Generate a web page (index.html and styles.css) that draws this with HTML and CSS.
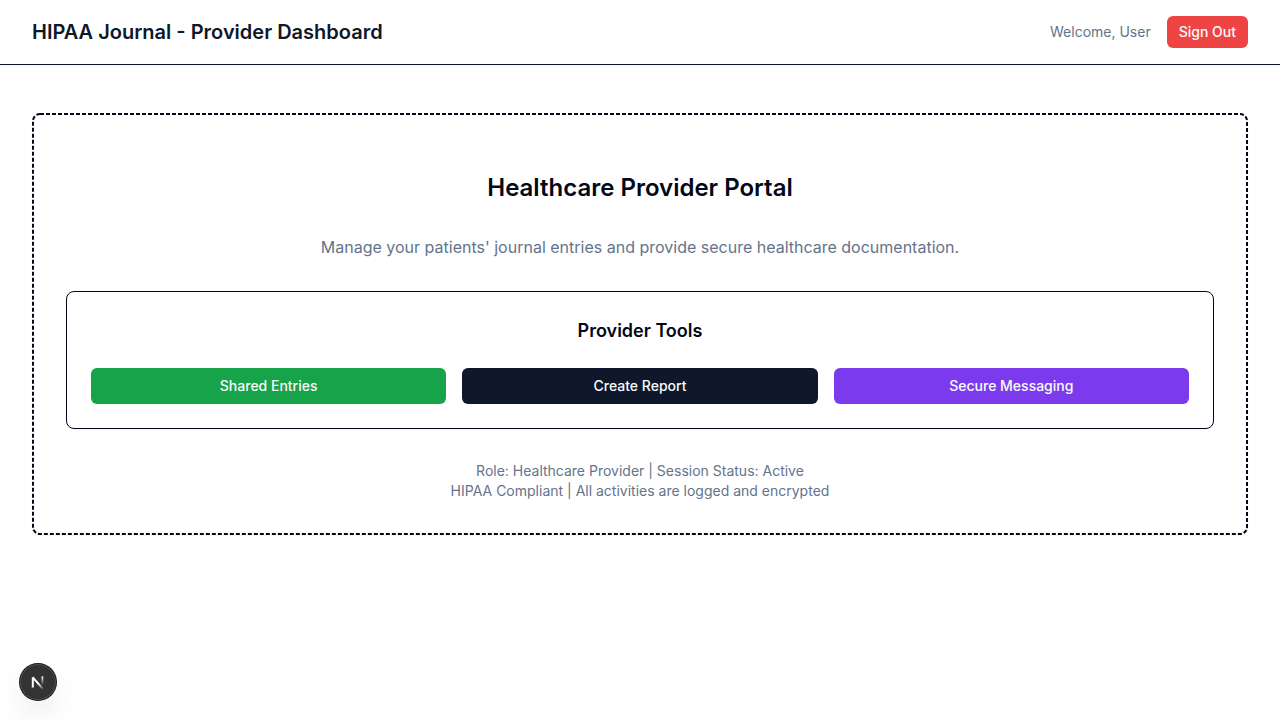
FILE: index.html
```html
<!DOCTYPE html>
<html lang="en">
<head>
  <meta charset="utf-8">
  <meta name="viewport" content="width=device-width, initial-scale=1">
  <title>HIPAA Journal - Provider Dashboard</title>
  <link rel="stylesheet" href="styles.css">
</head>
<body>
  <header class="topbar">
    <h1 class="topbar-title">HIPAA Journal - Provider Dashboard</h1>
    <div class="topbar-actions">
      <span class="welcome">Welcome, User</span>
      <button class="btn btn-small btn-red" type="button">Sign Out</button>
    </div>
  </header>
  <main class="main">
    <section class="portal">
      <svg class="portal-outline" aria-hidden="true">
        <rect class="portal-outline-rect" x="1" y="1" rx="7"/>
      </svg>
      <h2 class="portal-title">Healthcare Provider Portal</h2>
      <p class="portal-text">Manage your patients' journal entries and provide secure healthcare documentation.</p>
      <section class="tools">
        <h3 class="tools-title">Provider Tools</h3>
        <div class="tools-grid">
          <button class="btn btn-green" type="button">Shared Entries</button>
          <button class="btn btn-navy" type="button">Create Report</button>
          <button class="btn btn-violet" type="button">Secure Messaging</button>
        </div>
      </section>
      <div class="status">
        <p>Role: Healthcare Provider | Session Status: Active</p>
        <p>HIPAA Compliant | All activities are logged and encrypted</p>
      </div>
    </section>
  </main>
  <button class="dev-badge" type="button" aria-label="Open developer tools">
    <svg width="36" height="36" viewBox="0 0 36 36" fill="none" aria-hidden="true">
      <defs>
        <linearGradient id="fade-diagonal" x1="19" y1="19" x2="24" y2="25" gradientUnits="userSpaceOnUse">
          <stop stop-color="#fff"/>
          <stop offset="1" stop-color="#fff" stop-opacity="0"/>
        </linearGradient>
        <linearGradient id="fade-stem" x1="22" y1="12.5" x2="22" y2="21" gradientUnits="userSpaceOnUse">
          <stop stop-color="#fff"/>
          <stop offset="1" stop-color="#fff" stop-opacity="0"/>
        </linearGradient>
      </defs>
      <path d="M12.8 23.6V13.4L23 25" stroke="url(#fade-diagonal)" stroke-width="2" stroke-linejoin="bevel"/>
      <path d="M22.4 12.4V22" stroke="url(#fade-stem)" stroke-width="1.8"/>
    </svg>
  </button>
</body>
</html>
```
FILE: styles.css
```css
* {
  box-sizing: border-box;
  margin: 0;
}

body {
  min-height: 100vh;
  background: #fff;
  color: #020817;
  font-family: Inter, "Liberation Sans", sans-serif;
  font-size: 14px;
  line-height: 20px;
}

.topbar {
  display: flex;
  align-items: center;
  justify-content: space-between;
  padding: 16px 32px;
  border-bottom: 1px solid #0f172a;
  box-shadow: 0 1px 2px rgba(0, 0, 0, 0.05);
}

.topbar-title {
  color: #0f172a;
  font-size: 20px;
  line-height: 28px;
  font-weight: 600;
}

.topbar-actions {
  display: flex;
  align-items: center;
  gap: 16px;
}

.welcome,
.portal-text,
.status {
  color: #64748b;
}

.btn {
  height: 36px;
  padding: 0 16px;
  border: 0;
  border-radius: 6px;
  color: #f8fafc;
  font: inherit;
  font-weight: 500;
  cursor: pointer;
}

.btn-small {
  height: 32px;
  padding: 0 12px;
}

.btn-red { background: #ef4444; }
.btn-green { background: #16a34a; }
.btn-navy { background: #0f172a; }
.btn-violet { background: #7c3aed; }

.main {
  padding: 48px 32px;
}

.portal {
  position: relative;
  padding: 34px;
  border-radius: 8px;
  box-shadow: 0 1px 2px rgba(0, 0, 0, 0.05);
  text-align: center;
}

/* Dashed frame with a 4px dash and a 2px gap, drawn over the card edge. */
.portal-outline {
  position: absolute;
  inset: 0;
  width: 100%;
  height: 100%;
  pointer-events: none;
}

.portal-outline-rect {
  width: calc(100% - 2px);
  height: calc(100% - 2px);
  fill: none;
  stroke: #020817;
  stroke-width: 2px;
  stroke-dasharray: 4 2;
}

.portal-title {
  padding: 24px 0 30px;
  font-size: 24px;
  line-height: 34px;
  font-weight: 600;
}

.portal-text {
  margin-bottom: 32px;
  font-size: 16px;
  line-height: 24px;
}

.tools {
  padding: 24px;
  border: 1px solid #020817;
  border-radius: 8px;
  box-shadow: 0 1px 2px rgba(0, 0, 0, 0.05);
}

.tools-title {
  margin-bottom: 22px;
  font-size: 18px;
  line-height: 30px;
  font-weight: 600;
}

.tools-grid {
  display: grid;
  grid-template-columns: repeat(3, 1fr);
  gap: 16px;
}

.status {
  margin-top: 32px;
}

.dev-badge {
  position: fixed;
  left: 20px;
  bottom: 20px;
  display: flex;
  width: 36px;
  height: 36px;
  padding: 0;
  border: 0;
  border-radius: 50%;
  background: #333;
  box-shadow: 0 0 0 1px #171717, inset 0 0 0 1px rgba(255, 255, 255, 0.14), 0 16px 32px -8px rgba(0, 0, 0, 0.24);
  cursor: pointer;
}
```
